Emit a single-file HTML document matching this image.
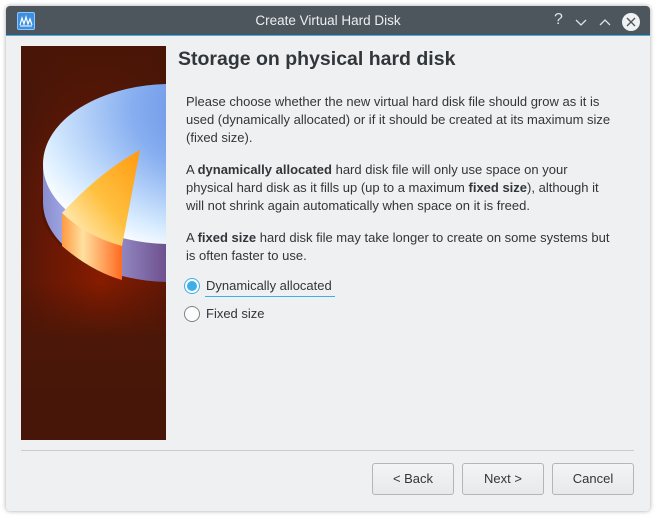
<!DOCTYPE html>
<html><head><meta charset="utf-8"><style>
*{margin:0;padding:0;box-sizing:border-box}
body{width:662px;height:523px;background:#fff;font-family:"Liberation Sans","DejaVu Sans",sans-serif;color:#31363b;position:relative;overflow:hidden}
.win{position:absolute;left:6px;top:6px;width:644px;height:505px;background:#eff0f1;border-radius:4px;box-shadow:0 0 5px rgba(0,0,0,.35);overflow:hidden}
.tb{position:absolute;left:0;top:0;width:644px;height:30px;background:#4d555d;border-bottom:1px solid #3daee9}
.tt{position:absolute;left:0;right:0;top:7px;text-align:center;color:#eceff1;font-size:13.5px}
.ico{position:absolute;left:11px;top:6px;width:18px;height:18px;background:#3d8fe0;border:1px solid #8cc4ff;border-radius:2px}
.p{position:absolute;white-space:nowrap;font-size:13px;line-height:18px}
h1{position:absolute;left:172px;top:42px;font-size:19.5px;font-weight:bold;color:#31363b;white-space:nowrap}
.btn{position:absolute;top:457px;width:82px;height:32px;border:1px solid #b3b5b7;border-radius:3px;background:linear-gradient(#f3f4f5,#e8e9ea);font-size:13px;text-align:center;line-height:30px}
</style></head><body>
<div class="win">
<div class="tb">
<div class="ico"><svg width="16" height="16" viewBox="0 0 16 16"><path d="M2 12 L4 5 L6 11 L8 4 L10 11 L12 6 L14 12" stroke="#fff" fill="none" stroke-width="1.2"/><path d="M2 13H14" stroke="#fff"/></svg></div>
<div class="tt">Create Virtual Hard Disk</div>
<div style="position:absolute;left:548px;top:5px;color:#dfe2e4;font-size:16px">?</div>
<svg style="position:absolute;left:568px;top:6px" width="70" height="20"><path d="M2 8 L7 13 L12 8" stroke="#dfe2e4" fill="none" stroke-width="1.3"/><path d="M26 13 L31 8 L36 13" stroke="#dfe2e4" fill="none" stroke-width="1.3"/><circle cx="57" cy="10" r="9" fill="#f0f1f2"/><path d="M53 6 L61 14 M61 6 L53 14" stroke="#4d555d" stroke-width="1.4"/></svg>
</div>
<svg style="position:absolute;left:15px;top:40px" width="145" height="394" viewBox="0 0 145 394">
<defs>
<radialGradient id="bg" cx="0.55" cy="0.6" r="0.7"><stop offset="0" stop-color="#861c00"/><stop offset="0.5" stop-color="#6a1804"/><stop offset="1" stop-color="#44160a"/></radialGradient>
<linearGradient id="bg2" x1="0" y1="0" x2="0" y2="1"><stop offset="0" stop-color="#4a1506" stop-opacity=".9"/><stop offset="0.3" stop-color="#4a1506" stop-opacity="0"/><stop offset="0.6" stop-color="#4a1506" stop-opacity="0"/><stop offset="0.75" stop-color="#4a1708"/><stop offset="1" stop-color="#471608"/></linearGradient>
<radialGradient id="top" cx="0.85" cy="0.15" r="1"><stop offset="0" stop-color="#4f74d8"/><stop offset="0.5" stop-color="#86aef0"/><stop offset="0.85" stop-color="#d8ecff"/><stop offset="1" stop-color="#ffffff"/></radialGradient>
<linearGradient id="side" x1="0" y1="0" x2="1" y2="0"><stop offset="0" stop-color="#8a8ed0"/><stop offset="0.3" stop-color="#b0b8f0"/><stop offset="1" stop-color="#6a4a88"/></linearGradient>
<linearGradient id="or" x1="0" y1="1" x2="1" y2="0"><stop offset="0" stop-color="#fffbe0"/><stop offset="0.5" stop-color="#ffc040"/><stop offset="1" stop-color="#ff9a10"/></linearGradient>
<linearGradient id="ors" x1="0" y1="0" x2="1" y2="0"><stop offset="0" stop-color="#ff9a40"/><stop offset="0.35" stop-color="#ffe0a0"/><stop offset="1" stop-color="#ff6a20"/></linearGradient>
</defs>
<rect width="145" height="394" fill="url(#bg)"/>
<rect width="145" height="394" fill="url(#bg2)"/>
<ellipse cx="150" cy="160" rx="130" ry="75" fill="#2a0800" opacity=".25"/>
<path d="M22 120 L22 155 A128 80 0 0 0 150 236 L150 201 Z" fill="url(#side)"/>
<path d="M41 168 L41 200 Q70 225 101 234 L101 200 Z" fill="url(#ors)"/>
<ellipse cx="150" cy="118" rx="128" ry="80" fill="url(#top)"/>
<path d="M41 167 Q80 125 119 104 L101 200 Q65 190 41 167 Z" fill="url(#or)"/>
</svg>
<h1>Storage on physical hard disk</h1>
<div class="p" style="left:180px;top:87px">Please choose whether the new virtual hard disk file should grow as it is<br>used (dynamically allocated) or if it should be created at its maximum size<br>(fixed size).</div>
<div class="p" style="left:180px;top:155px">A <b>dynamically allocated</b> hard disk file will only use space on your<br>physical hard disk as it fills up (up to a maximum <b>fixed size</b>), although it<br>will not shrink again automatically when space on it is freed.</div>
<div class="p" style="left:180px;top:223px">A <b>fixed size</b> hard disk file may take longer to create on some systems but<br>is often faster to use.</div>
<svg style="position:absolute;left:177px;top:271px" width="18" height="46"><circle cx="9" cy="9" r="7.5" fill="#fff" stroke="#3daee9"/><circle cx="9" cy="9" r="5" fill="#3daee9"/><circle cx="9" cy="37" r="7.5" fill="#fcfcfc" stroke="#7f8285"/></svg>
<div class="p" style="left:200px;top:271px">Dynamically allocated</div>
<div style="position:absolute;left:199px;top:290px;width:130px;height:1px;background:#3daee9"></div>
<div class="p" style="left:200px;top:299px">Fixed size</div>
<div style="position:absolute;left:15px;top:444px;width:613px;height:1px;background:#c8cacc"></div>
<div class="btn" style="left:366px">&lt; Back</div>
<div class="btn" style="left:456px">Next &gt;</div>
<div class="btn" style="left:546px">Cancel</div>
</div>
</body></html>
